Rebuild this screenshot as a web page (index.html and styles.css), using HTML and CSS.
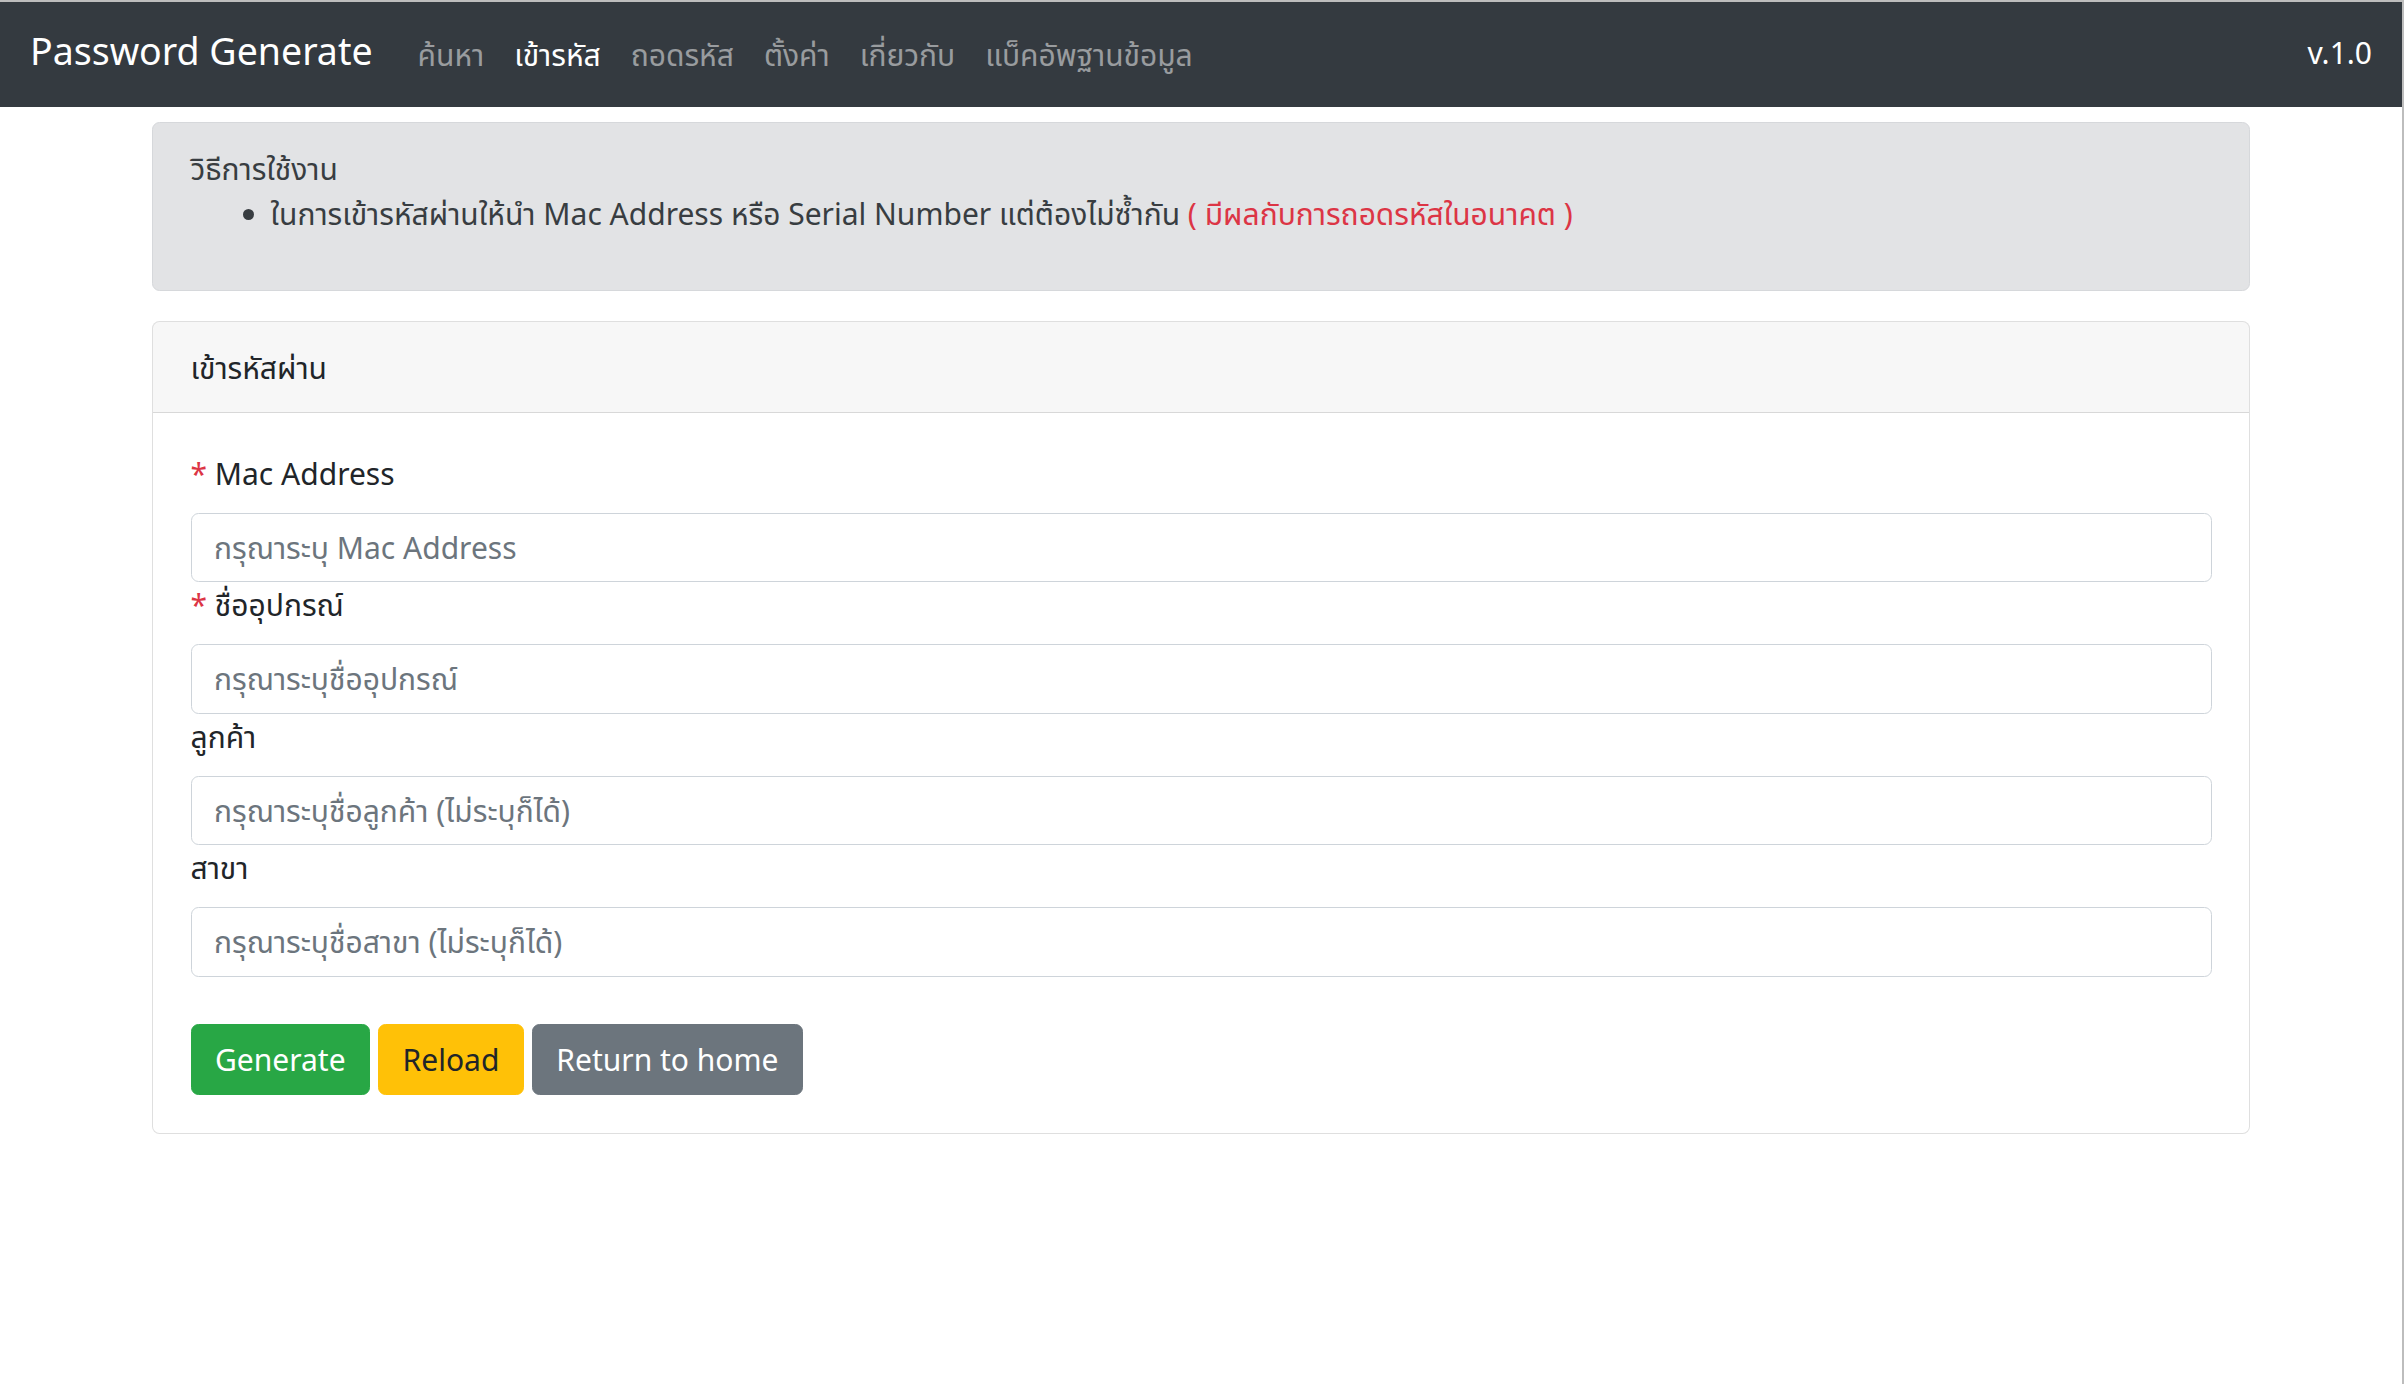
FILE: index.html
```html
<!DOCTYPE html>
<html lang="th">
<head>
<meta charset="utf-8">
<title>Password Generate</title>
<link rel="stylesheet" href="styles.css">
</head>
<body>
<div class="frame">
  <nav class="navbar">
    <a class="brand" href="#">Password Generate</a>
    <ul class="nav">
      <li><a class="nav-link" href="#">ค้นหา</a></li>
      <li><a class="nav-link active" href="#">เข้ารหัส</a></li>
      <li><a class="nav-link" href="#">ถอดรหัส</a></li>
      <li><a class="nav-link" href="#">ตั้งค่า</a></li>
      <li><a class="nav-link" href="#">เกี่ยวกับ</a></li>
      <li><a class="nav-link" href="#">แบ็คอัพฐานข้อมูล</a></li>
    </ul>
    <span class="version">v.1.0</span>
  </nav>

  <main class="container">
    <div class="alert">
      <div>วิธีการใช้งาน</div>
      <ul class="alert-list">
        <li>ในการเข้ารหัสผ่านให้นำ Mac Address หรือ Serial Number แต่ต้องไม่ซ้ำกัน <span class="danger">( มีผลกับการถอดรหัสในอนาคต )</span></li>
      </ul>
    </div>

    <div class="card">
      <div class="card-header">เข้ารหัสผ่าน</div>
      <div class="card-body">
        <label class="label"><span class="danger">*</span> Mac Address</label>
        <input class="input" type="text" placeholder="กรุณาระบุ Mac Address">
        <label class="label"><span class="danger">*</span> ชื่ออุปกรณ์</label>
        <input class="input" type="text" placeholder="กรุณาระบุชื่ออุปกรณ์">
        <label class="label">ลูกค้า</label>
        <input class="input" type="text" placeholder="กรุณาระบุชื่อลูกค้า (ไม่ระบุก็ได้)">
        <label class="label">สาขา</label>
        <input class="input" type="text" placeholder="กรุณาระบุชื่อสาขา (ไม่ระบุก็ได้)">
        <div class="actions">
          <button class="btn btn-success" type="button">Generate</button>
          <button class="btn btn-warning" type="button">Reload</button>
          <button class="btn btn-secondary" type="button">Return to home</button>
        </div>
      </div>
    </div>
  </main>
</div>
</body>
</html>
```

FILE: styles.css
```css
* {
  box-sizing: border-box;
}

html, body {
  margin: 0;
  padding: 0;
  background: #fff;
}

body {
  font-family: "Noto Sans", "Noto Sans Thai", "Open Sans", sans-serif;
  font-size: 30px;
  line-height: 1.5;
  color: #212529;
}

.frame {
  min-height: 100vh;
  border-top: 2px solid #bdbdbd;
  border-right: 2px solid #bdbdbd;
}

.navbar {
  display: flex;
  align-items: center;
  background: #343a40;
  padding: 15px 30px;
}

.brand {
  font-size: 37.5px;
  line-height: 56.25px;
  padding: 5.5px 0 13.25px;
  margin-right: 30px;
  color: #fff;
  text-decoration: none;
  white-space: nowrap;
}

.nav {
  display: flex;
  list-style: none;
  margin: 0;
  padding: 0;
}

.nav-link {
  display: block;
  padding: 15px;
  color: rgba(255, 255, 255, 0.5);
  text-decoration: none;
}

.nav-link.active {
  color: #fff;
}

.version {
  margin-left: auto;
  color: #fff;
  padding: 13px 0 17px;
}

.container {
  max-width: 2098px;
  margin: 0 auto;
  padding-top: 15px;
}

.alert {
  background: #e2e3e5;
  border: 1px solid #d6d8db;
  color: #383d41;
  border-radius: 7.5px;
  padding: 22.5px 37.5px;
  margin-bottom: 30px;
}

.alert-list {
  margin: 0 0 32px;
  padding-left: 80px;
}

.danger {
  color: #dc3545;
}

.card {
  border: 1px solid rgba(0, 0, 0, 0.125);
  border-radius: 7.5px;
  background: #fff;
}

.card-header {
  background: rgba(0, 0, 0, 0.03);
  border-bottom: 1px solid rgba(0, 0, 0, 0.125);
  padding: 22.5px 37.5px;
  border-radius: 6.5px 6.5px 0 0;
}

.card-body {
  padding: 37.5px;
}

.label {
  display: block;
  margin-bottom: 17px;
}

.input {
  display: block;
  width: 100%;
  height: 69.5px;
  padding: 11.25px 22.5px;
  font-family: inherit;
  font-size: 30px;
  line-height: 1.5;
  color: #495057;
  background: #fff;
  border: 1px solid #ced4da;
  border-radius: 7.5px;
  outline: none;
}

.input::placeholder {
  color: #6c757d;
  opacity: 1;
}

.actions {
  margin-top: 47.5px;
  display: flex;
  gap: 8px;
}

.btn {
  font-family: inherit;
  font-size: 30px;
  line-height: 1.5;
  padding: 12px 23.5px;
  border: 1px solid transparent;
  border-radius: 7.5px;
  cursor: pointer;
}

.btn-success {
  background: #28a745;
  border-color: #28a745;
  color: #fff;
}

.btn-warning {
  background: #ffc107;
  border-color: #ffc107;
  color: #212529;
}

.btn-secondary {
  background: #6c757d;
  border-color: #6c757d;
  color: #fff;
}
```
